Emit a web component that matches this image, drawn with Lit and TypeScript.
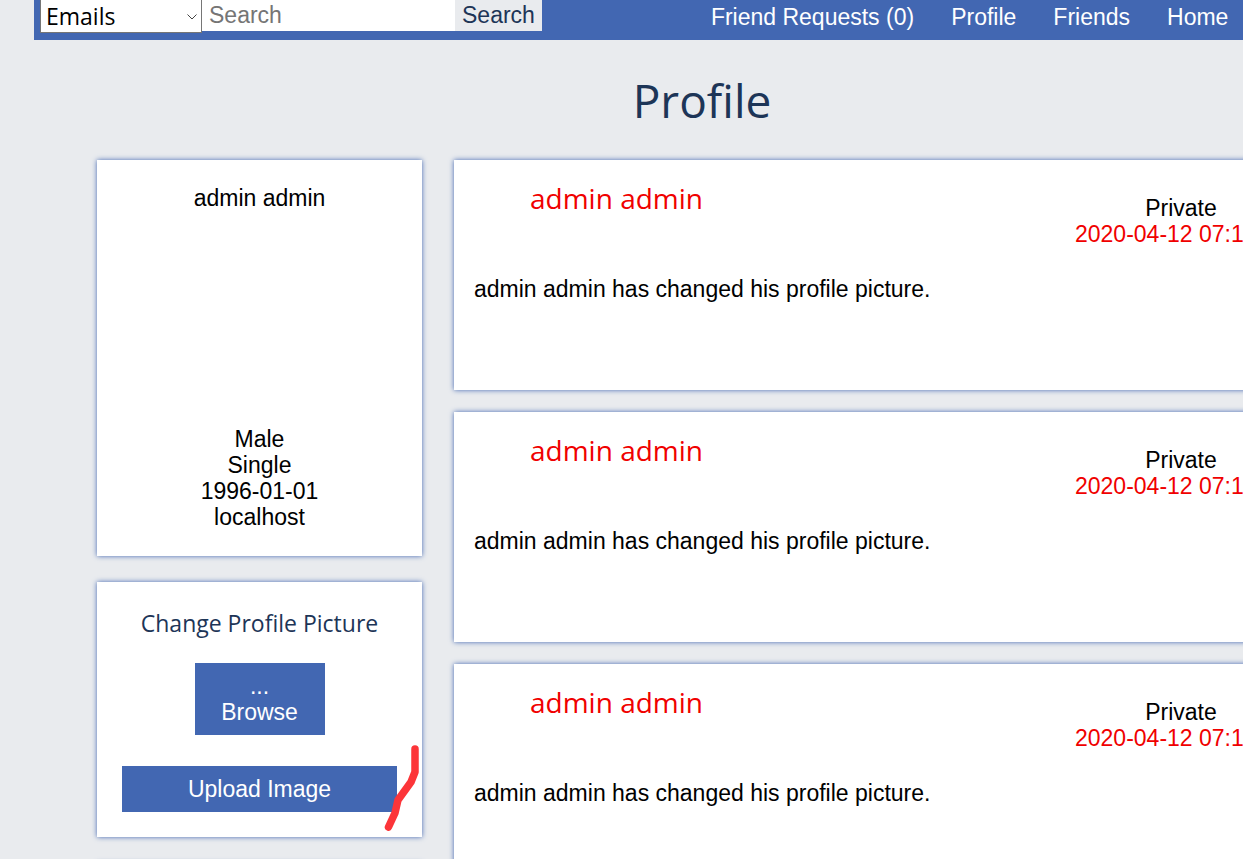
import { LitElement, html, css } from "lit";
import { customElement, state } from "lit/decorators.js";

interface Post {
  author: string;
  visibility: string;
  date: string;
  text: string;
}

const shared = css`
  * {
    box-sizing: border-box;
  }
  .card {
    background: #fff;
    box-shadow: 0 0 5px #4267b2;
  }
  button,
  input,
  select {
    font: inherit;
    border: 0;
    border-radius: 0;
    margin: 0;
  }
  h1,
  h2,
  p {
    margin: 0;
    font-weight: 400;
  }
`;

@customElement("site-header")
export class SiteHeader extends LitElement {
  static styles = [
    shared,
    css`
      :host {
        display: block;
      }
      .bar {
        display: flex;
        align-items: flex-start;
        height: 40px;
        padding-left: 6px;
        background: #4267b2;
      }
      .search {
        display: flex;
        align-items: flex-start;
      }
      .picker {
        display: grid;
        align-items: center;
      }
      .picker > * {
        grid-area: 1 / 1;
      }
      .kind {
        width: 162px;
        height: 33px;
        padding: 0 5px;
        appearance: none;
        background: #fff;
        border: solid #767676;
        border-width: 0 1px 1px;
        font-family: "Open Sans", sans-serif;
        font-size: 23px;
        line-height: 32px;
        color: #000;
      }
      .chevron {
        justify-self: end;
        margin-right: 4px;
        width: 12px;
        height: 8px;
        pointer-events: none;
      }
      .query {
        width: 253px;
        height: 31px;
        padding: 0 7px;
        background: #fff;
      }
      .query::placeholder {
        color: #757575;
        opacity: 1;
      }
      .go {
        height: 31px;
        padding: 0 7px 2px;
        background: #e9ebee;
        color: #1d3557;
      }
      .links {
        display: flex;
        gap: 37px;
        margin-left: 169px;
        line-height: 34px;
        white-space: nowrap;
      }
      .links a {
        color: #fff;
        text-decoration: none;
      }
    `,
  ];

  render() {
    return html`
      <header class="bar">
        <form class="search" @submit=${(e: Event) => e.preventDefault()}>
          <div class="picker">
            <select class="kind" aria-label="Search in">
              <option>Emails</option>
            </select>
            <svg class="chevron" viewBox="0 0 12 8" aria-hidden="true">
              <path d="M1.5 1.5 6 6 10.5 1.5" fill="none" stroke="#444" stroke-width="1" />
            </svg>
          </div>
          <input class="query" type="text" placeholder="Search" aria-label="Search" />
          <button class="go" type="submit">Search</button>
        </form>
        <nav class="links">
          <a href="#requests">Friend Requests (0)</a>
          <a href="#profile">Profile</a>
          <a href="#friends">Friends</a>
          <a href="#home">Home</a>
        </nav>
      </header>
    `;
  }
}

@customElement("profile-sidebar")
export class ProfileSidebar extends LitElement {
  static styles = [
    shared,
    css`
      :host {
        display: flex;
        flex-direction: column;
        gap: 26px;
        text-align: center;
      }
      .about {
        display: flex;
        flex-direction: column;
        gap: 215px;
        padding: 25px 25px 26px;
      }
      .upload {
        position: relative;
        display: flex;
        flex-direction: column;
        align-items: center;
        padding: 25px;
      }
      .title {
        font-family: "Open Sans", sans-serif;
        font-size: 23px;
        line-height: 32px;
        color: #1d3557;
        white-space: nowrap;
      }
      .browse {
        width: 130px;
        margin: 24px 0 31px;
        padding: 10px;
        background: #4267b2;
        color: #fff;
        line-height: 26px;
      }
      .send {
        width: 100%;
        padding: 10px;
        background: #4267b2;
        color: #fff;
        line-height: 26px;
      }
      .mark {
        position: absolute;
        right: 0;
        bottom: 0;
        width: 42px;
        height: 97px;
      }
      .next {
        height: 120px;
      }
    `,
  ];

  render() {
    return html`
      <section class="card about">
        <p>admin admin</p>
        <div>
          <p>Male</p>
          <p>Single</p>
          <p>1996-01-01</p>
          <p>localhost</p>
        </div>
      </section>
      <form class="card upload" @submit=${(e: Event) => e.preventDefault()}>
        <h2 class="title">Change Profile Picture</h2>
        <button class="browse" type="button">...<br />Browse</button>
        <button class="send" type="submit">Upload Image</button>
        <svg class="mark" viewBox="0 0 42 97" aria-hidden="true">
          <path
            d="M35 9V32L31 42 18 60 15 73 8.5 87"
            fill="none"
            stroke="#fc3539"
            stroke-width="7.5"
            stroke-linecap="round"
            stroke-linejoin="round"
          />
        </svg>
      </form>
      <section class="card next"></section>
    `;
  }
}

@customElement("post-feed")
export class PostFeed extends LitElement {
  @state() private posts: Post[] = Array.from({ length: 3 }, () => ({
    author: "admin admin",
    visibility: "Private",
    date: "2020-04-12 07:1",
    text: "admin admin has changed his profile picture.",
  }));

  static styles = [
    shared,
    css`
      :host {
        display: flex;
        flex-direction: column;
        gap: 22px;
      }
      .post {
        min-height: 230px;
        padding: 20px;
      }
      .head {
        display: flex;
        justify-content: space-between;
        padding-left: 56px;
      }
      .author {
        font-family: "Open Sans", sans-serif;
        font-size: 28px;
        line-height: 36px;
        color: #f00000;
      }
      .meta {
        width: 212px;
        padding-top: 15px;
        white-space: nowrap;
      }
      .visibility {
        text-align: center;
      }
      .date {
        color: #f00000;
      }
      .text {
        margin-top: 29px;
      }
    `,
  ];

  render() {
    return this.posts.map(
      (post) => html`
        <article class="card post">
          <div class="head">
            <h2 class="author">${post.author}</h2>
            <div class="meta">
              <p class="visibility">${post.visibility}</p>
              <p class="date">${post.date}</p>
            </div>
          </div>
          <p class="text">${post.text}</p>
        </article>
      `
    );
  }
}

@customElement("app-root")
export class AppRoot extends LitElement {
  static styles = [
    shared,
    css`
      :host {
        display: block;
        height: 100vh;
        overflow: hidden;
        background: #e9ebee;
        font-family: "Liberation Sans", Arial, sans-serif;
        font-size: 23px;
        line-height: 26px;
        color: #000;
      }
      /* The page is wider than the window and runs past its right edge. */
      .page {
        margin-left: 34px;
        margin-right: -127px;
      }
      .heading {
        padding: 28px 0;
        font-family: "Open Sans", sans-serif;
        font-size: 46px;
        line-height: 64px;
        text-align: center;
        color: #1d3557;
      }
      .columns {
        display: grid;
        grid-template-columns: 325px 1fr;
        align-items: start;
        gap: 32px;
        padding: 0 63px;
      }
    `,
  ];

  render() {
    return html`
      <div class="page">
        <site-header></site-header>
        <h1 class="heading">Profile</h1>
        <main class="columns">
          <profile-sidebar></profile-sidebar>
          <post-feed></post-feed>
        </main>
      </div>
    `;
  }
}
